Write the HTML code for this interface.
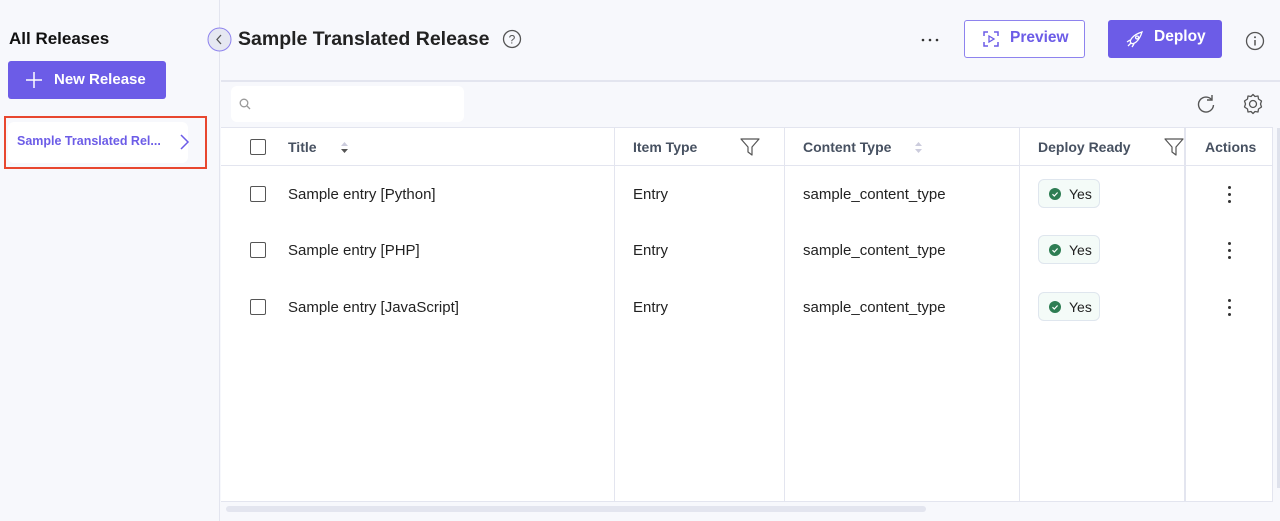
<!DOCTYPE html><html><head><style>
*{box-sizing:border-box;margin:0;padding:0}
body{width:1280px;height:521px;overflow:hidden;background:#f7f8fc;font-family:"Liberation Sans",sans-serif;position:relative;color:#222}
.a{position:absolute}
.side{left:0;top:0;width:220px;height:521px;border-right:1px solid #e3e5ef;background:#f7f8fc}
.t{font-weight:bold}
.hd{font-size:14px;font-weight:bold;color:#475161}
.cell{font-size:15px;color:#222}
.vl{width:1px;background:#e3e5ef}
.hl{height:1px;background:#e3e5ef}
.cb{width:16px;height:16px;border:1.5px solid #555;border-radius:2px;background:#fff}
.yes{width:62px;height:29px;border:1px solid #dfe6ee;border-radius:6px;background:#f4fbf8;font-size:14px}
.yes svg{position:absolute;left:10px;top:8px}
.yes span{position:absolute;left:30px;top:6px}
.dots{width:3px}
.dots b{display:block;width:3px;height:3px;border-radius:50%;background:#333;margin-bottom:4px}
</style></head><body>
<div class="a side"></div>
<div class="a t" style="left:9px;top:29px;font-size:17px;color:#111">All Releases</div>
<div class="a" style="left:8px;top:61px;width:158px;height:38px;background:#6c5ce7;border-radius:3px;color:#fff;font-weight:bold;font-size:15px">
<svg class="a" style="left:18px;top:11px" width="16" height="16"><path d="M8 0V16M0 8H16" stroke="#fff" stroke-width="1.5"/></svg>
<span class="a" style="left:46px;top:10px">New Release</span></div>
<div class="a" style="left:4px;top:116px;width:203px;height:53px;border:2px solid #e8472f"></div>
<div class="a" style="left:8px;top:122px;width:180px;height:41px;background:#fff;border-radius:6px"></div>
<div class="a t" style="left:17px;top:134px;font-size:12.5px;color:#6c5ce7">Sample Translated Rel...</div>
<svg class="a" style="left:178px;top:133px" width="12" height="18"><path d="M3 2L10 9L3 16" fill="none" stroke="#6c5ce7" stroke-width="1.5"/></svg>
<svg class="a" style="left:207px;top:27px" width="25" height="25"><circle cx="12.5" cy="12.5" r="11.5" fill="#e6e8f2" stroke="#8e83ee" stroke-width="1"/><path d="M14 8L10 12.5L14 17" fill="none" stroke="#555" stroke-width="1.3"/></svg>
<div class="a" style="left:238px;top:28px;font-size:19.5px;font-weight:bold;color:#222">Sample Translated Release</div>
<svg class="a" style="left:502px;top:29px" width="20" height="20"><circle cx="10" cy="10" r="8.5" fill="none" stroke="#555" stroke-width="1.3"/><text x="10" y="14.5" font-size="12" text-anchor="middle" fill="#555" font-family="Liberation Sans">?</text></svg>
<svg class="a" style="left:920px;top:37px" width="20" height="6"><circle cx="3" cy="3" r="1.3" fill="#333"/><circle cx="10" cy="3" r="1.3" fill="#333"/><circle cx="17" cy="3" r="1.3" fill="#333"/></svg>
<div class="a" style="left:964px;top:20px;width:121px;height:38px;border:1.5px solid #8e83ee;border-radius:3px;background:#fff;color:#6c5ce7;font-weight:bold;font-size:15.5px">
<svg class="a" style="left:18px;top:10px" width="16" height="16"><path d="M1 5V1H5M11 1H15V5M15 11V15H11M5 15H1V11" fill="none" stroke="#6c5ce7" stroke-width="1.5"/><path d="M6 5L11 8L6 11Z" fill="none" stroke="#6c5ce7" stroke-width="1.3"/></svg>
<span class="a" style="left:45px;top:8px">Preview</span></div>
<div class="a" style="left:1108px;top:20px;width:114px;height:38px;background:#6c5ce7;border-radius:3px;color:#fff;font-weight:bold;font-size:15.5px">
<svg class="a" style="left:18px;top:10px" width="18" height="18"><path d="M5 13C3 11 6 5 16 2C13 12 7 15 5 13ZM11 6a1.5 1.5 0 1 0 .1 0M2 16L5 13M1 12L4 10M6 17L8 14" fill="none" stroke="#fff" stroke-width="1.3"/></svg>
<span class="a" style="left:46px;top:8px">Deploy</span></div>
<svg class="a" style="left:1245px;top:31px" width="20" height="20"><circle cx="10" cy="10" r="8.5" fill="none" stroke="#555" stroke-width="1.3"/><path d="M10 9V14.5" stroke="#555" stroke-width="1.5"/><circle cx="10" cy="6.3" r="1" fill="#555"/></svg>
<div class="a hl" style="left:221px;top:80px;width:1059px;height:2px"></div>
<div class="a" style="left:231px;top:86px;width:233px;height:36px;background:#fff;border-radius:6px"></div>
<svg class="a" style="left:239px;top:98px" width="12" height="12"><circle cx="5" cy="5" r="3.8" fill="none" stroke="#999" stroke-width="1.3"/><path d="M8 8L11 11" stroke="#999" stroke-width="1.3"/></svg>
<svg class="a" style="left:1196px;top:94px" width="20" height="20"><path d="M16 6A7.5 7.5 0 1 0 17.5 11" fill="none" stroke="#555" stroke-width="1.4"/><path d="M16 1V6H11" fill="none" stroke="#555" stroke-width="1.4"/></svg>
<svg class="a" style="left:1242px;top:93px" width="22" height="22"><path d="M11 1.5L13 3.5L16 3L16.5 6L19.5 8L18.5 11L19.5 14L16.5 16L16 19L13 18.5L11 20.5L9 18.5L6 19L5.5 16L2.5 14L3.5 11L2.5 8L5.5 6L6 3L9 3.5Z" fill="none" stroke="#555" stroke-width="1.3" stroke-linejoin="round"/><circle cx="11" cy="11" r="3.5" fill="none" stroke="#555" stroke-width="1.3"/></svg>
<div class="a" style="left:221px;top:127px;width:1052px;height:375px;background:#fff;border-top:1px solid #e3e5ef;border-bottom:1px solid #e3e5ef;border-right:1px solid #e3e5ef"></div>
<div class="a hl" style="left:221px;top:165px;width:1052px"></div>
<div class="a vl" style="left:614px;top:128px;height:373px"></div>
<div class="a vl" style="left:784px;top:128px;height:373px"></div>
<div class="a vl" style="left:1019px;top:128px;height:373px"></div>
<div class="a vl" style="left:1184px;top:128px;height:373px;width:2px"></div>
<div class="a" style="left:1277px;top:128px;width:3px;height:360px;background:#dfe2ec"></div>
<div class="a" style="left:226px;top:506px;width:700px;height:6px;border-radius:3px;background:#e3e5ef"></div>
<div class="a cb" style="left:250px;top:139px"></div>
<div class="a hd" style="left:288px;top:139px">Title</div>
<svg class="a" style="left:340px;top:141px" width="9" height="13"><path d="M1 5L4.5 1L8 5Z" fill="#ccd"/><path d="M1 8L4.5 12L8 8Z" fill="#555"/></svg>
<div class="a hd" style="left:633px;top:139px">Item Type</div>
<svg class="a" style="left:740px;top:137px" width="20" height="20"><path d="M1 2H19L12 10V18L8 15V10Z" fill="none" stroke="#555" stroke-width="1.2" stroke-linejoin="round"/></svg>
<div class="a hd" style="left:803px;top:139px">Content Type</div>
<svg class="a" style="left:914px;top:141px" width="9" height="13"><path d="M1 5L4.5 1L8 5Z" fill="#ccd"/><path d="M1 8L4.5 12L8 8Z" fill="#ccd"/></svg>
<div class="a hd" style="left:1038px;top:139px">Deploy Ready</div>
<svg class="a" style="left:1164px;top:137px" width="20" height="20"><path d="M1 2H19L12 10V18L8 15V10Z" fill="none" stroke="#555" stroke-width="1.2" stroke-linejoin="round"/></svg>
<div class="a hd" style="left:1205px;top:139px">Actions</div>

<div class="a cb" style="left:250px;top:186px"></div>
<div class="a cell" style="left:288px;top:186px">Sample entry [Python]</div>
<div class="a cell" style="left:633px;top:186px">Entry</div>
<div class="a cell" style="left:803px;top:186px">sample_content_type</div>
<div class="a yes" style="left:1038px;top:179px"><svg width="12" height="12"><circle cx="6" cy="6" r="6" fill="#2e7d53"/><path d="M3.5 6.2L5.3 8L8.6 4.5" fill="none" stroke="#fff" stroke-width="1.2"/></svg><span>Yes</span></div>
<div class="a dots" style="left:1228px;top:186px"><b></b><b></b><b></b></div>

<div class="a cb" style="left:250px;top:242px"></div>
<div class="a cell" style="left:288px;top:242px">Sample entry [PHP]</div>
<div class="a cell" style="left:633px;top:242px">Entry</div>
<div class="a cell" style="left:803px;top:242px">sample_content_type</div>
<div class="a yes" style="left:1038px;top:235px"><svg width="12" height="12"><circle cx="6" cy="6" r="6" fill="#2e7d53"/><path d="M3.5 6.2L5.3 8L8.6 4.5" fill="none" stroke="#fff" stroke-width="1.2"/></svg><span>Yes</span></div>
<div class="a dots" style="left:1228px;top:242px"><b></b><b></b><b></b></div>

<div class="a cb" style="left:250px;top:299px"></div>
<div class="a cell" style="left:288px;top:299px">Sample entry [JavaScript]</div>
<div class="a cell" style="left:633px;top:299px">Entry</div>
<div class="a cell" style="left:803px;top:299px">sample_content_type</div>
<div class="a yes" style="left:1038px;top:292px"><svg width="12" height="12"><circle cx="6" cy="6" r="6" fill="#2e7d53"/><path d="M3.5 6.2L5.3 8L8.6 4.5" fill="none" stroke="#fff" stroke-width="1.2"/></svg><span>Yes</span></div>
<div class="a dots" style="left:1228px;top:299px"><b></b><b></b><b></b></div>
</body></html>
